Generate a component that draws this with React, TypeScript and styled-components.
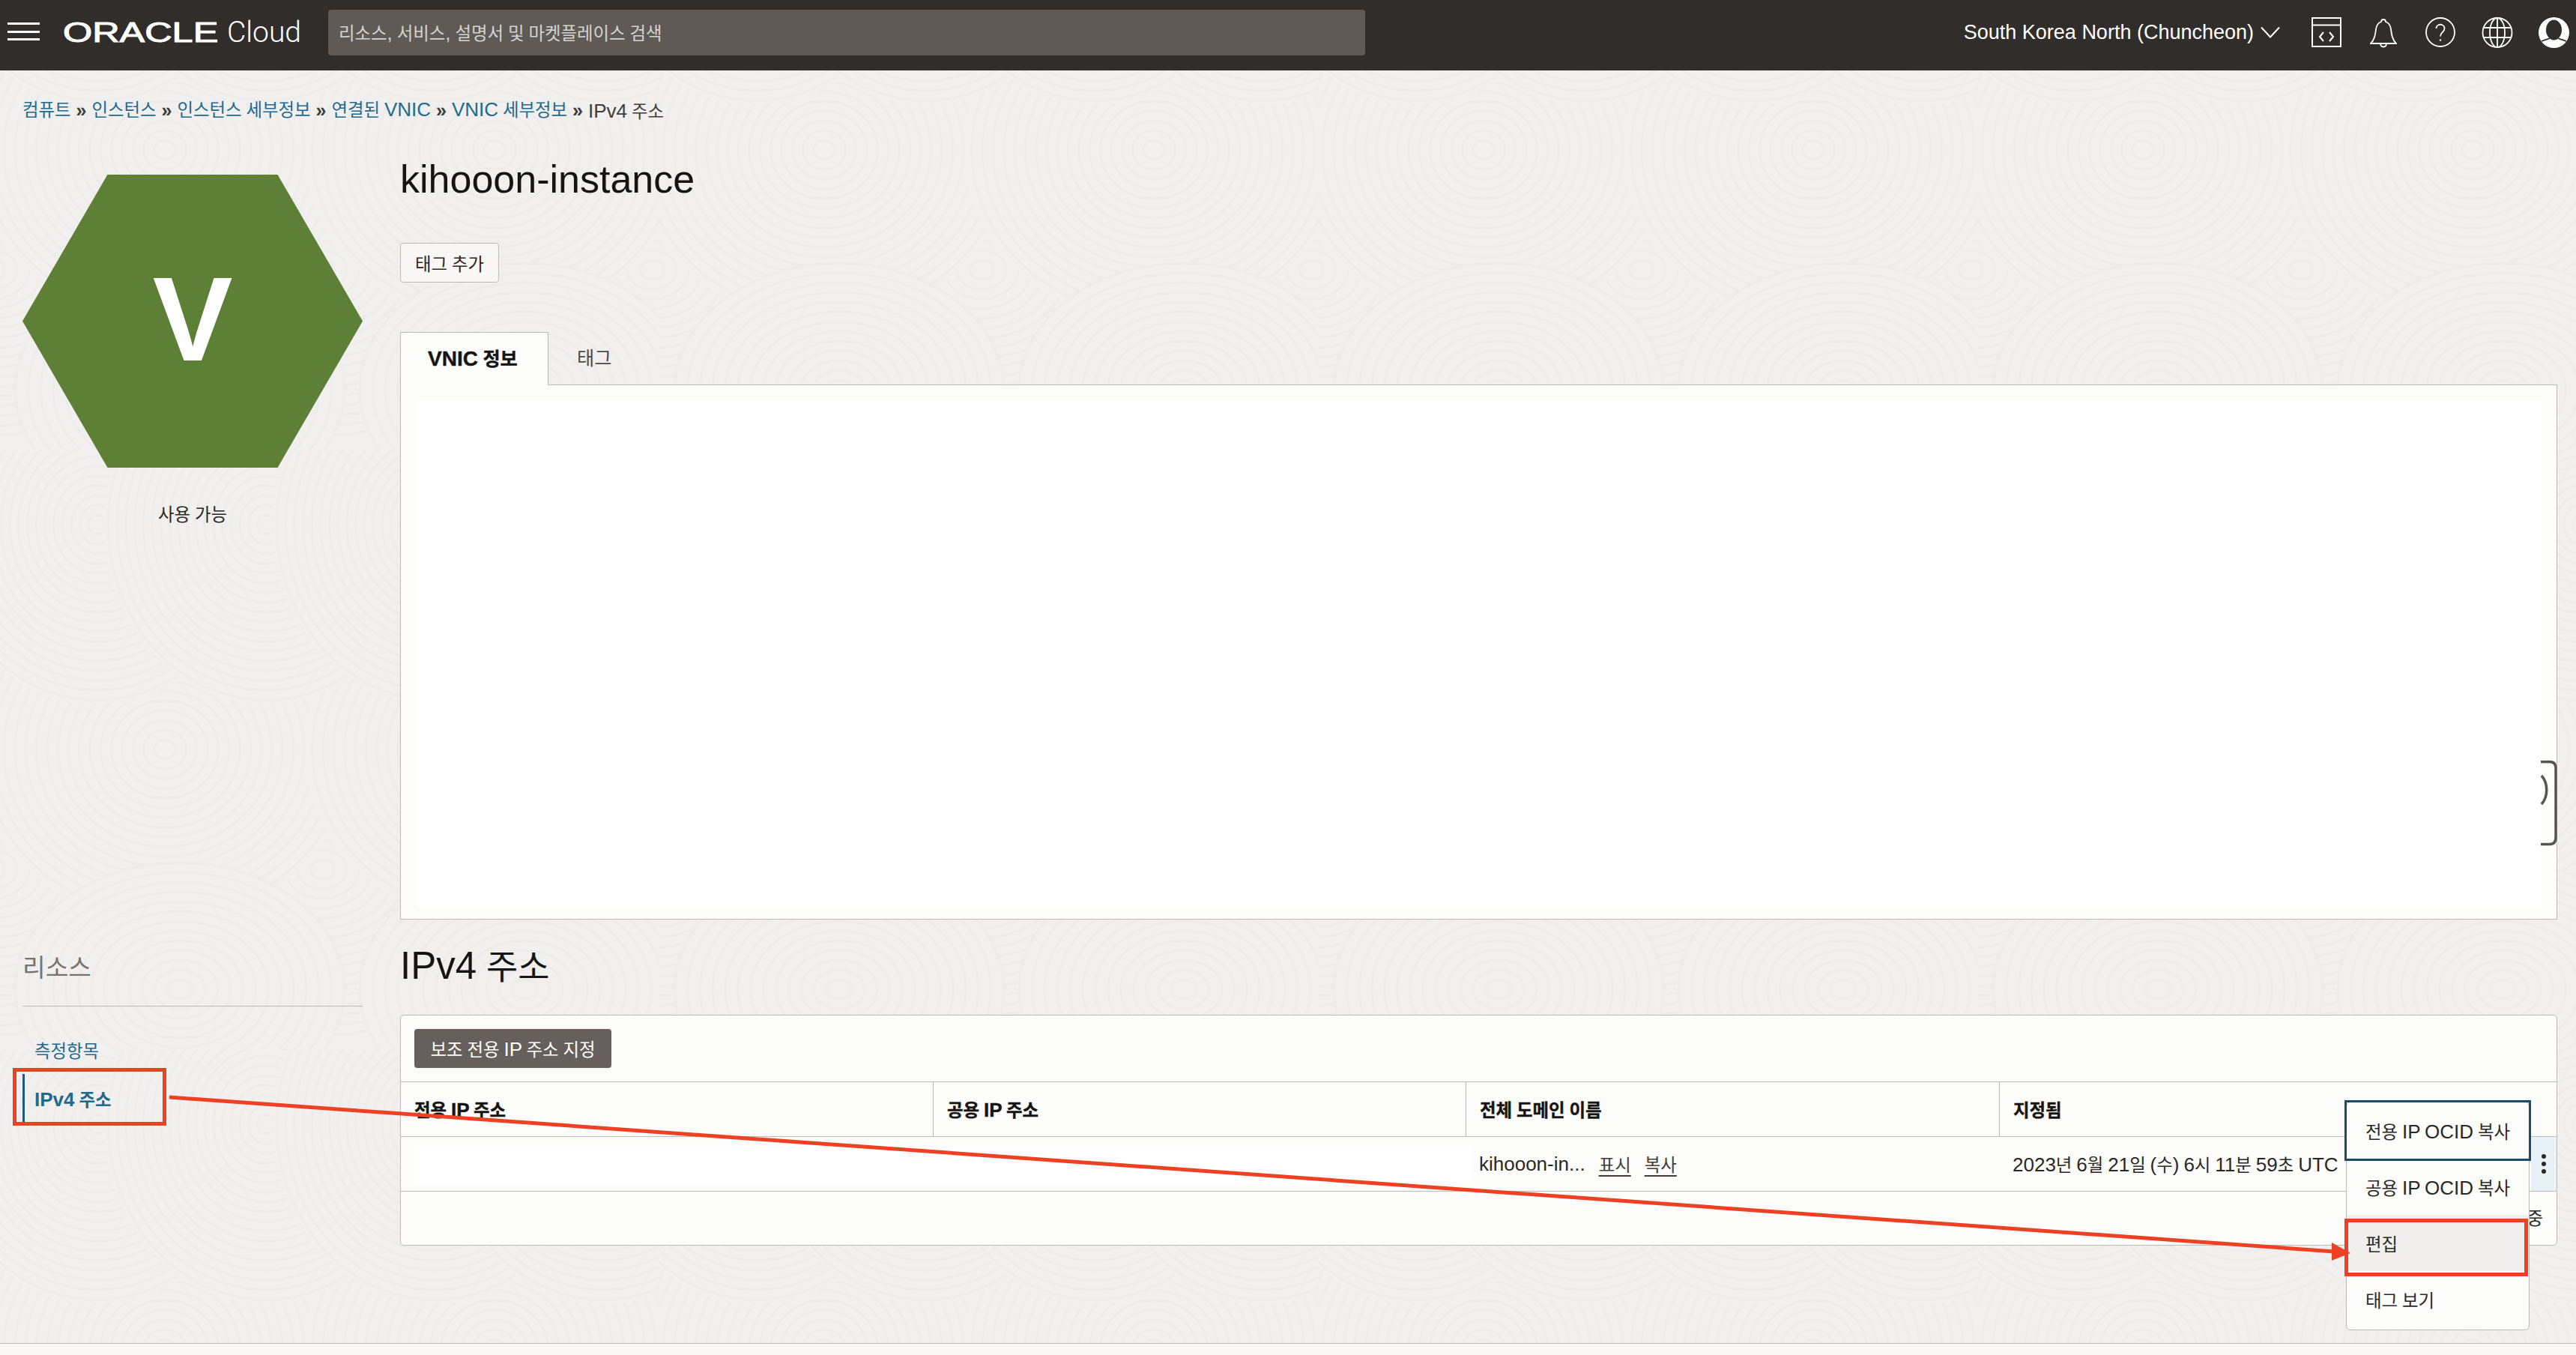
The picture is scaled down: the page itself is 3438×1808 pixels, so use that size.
import React from 'react';
import styled, { createGlobalStyle } from 'styled-components';

const SANS = `"Liberation Sans", "Noto Sans CJK KR", sans-serif`;

const Global = createGlobalStyle`
  html, body { margin: 0; padding: 0; background: #f1f0ee; }
  body { font-family: ${SANS}; color: #2a2826; }
  * { box-sizing: border-box; }
`;

const Page = styled.div`
  position: relative;
  width: 3438px;
  height: 1808px;
  overflow: hidden;
  display: flex;
  flex-direction: column;
  background: #f1f0ee;
`;

const Texture = styled.svg`
  position: absolute;
  inset: 0;
  pointer-events: none;
`;

const Hangul = styled.span`
  font-size: 0.9em;
`;

const Run = styled.span`
  white-space: pre;
  word-spacing: -1.3px;
`;

/* Hangul in the reference is set narrower than the Latin beside it */
const T = ({ children }: { children: string }) => (
  <Run>
    {children.split(/([가-힣]+)/).map((run, i) =>
      /[가-힣]/.test(run) ? <Hangul key={i}>{run}</Hangul> : <React.Fragment key={i}>{run}</React.Fragment>
    )}
  </Run>
);

const Header = styled.header`
  position: relative;
  height: 94px;
  flex: none;
  background: #312d2a;
  display: flex;
  align-items: center;
  padding: 0 9px 0 10px;
  color: #fff;
`;

const Burger = styled.div`
  width: 43px;
  height: 24px;
  display: flex;
  flex-direction: column;
  justify-content: space-between;
  margin-bottom: 10px;
  span { display: block; height: 3px; background: #fff; }
`;

const Logo = styled.div`
  width: 354px;
  margin-left: 31px;
  display: flex;
  align-items: center;
  height: 60px;
  margin-bottom: 6px;
`;

const Oracle = styled.span`
  display: inline-block;
  width: 219px;
  font-size: 36px;
  font-weight: 400;
  -webkit-text-stroke: 1px #fff;
  transform: scaleX(1.4);
  transform-origin: left center;
  white-space: nowrap;
`;

const Cloud = styled.span`
  font-family: Roboto, sans-serif;
  font-weight: 300;
  font-size: 39px;
  white-space: nowrap;
  margin-bottom: 2px;
`;

const Search = styled.div`
  width: 1384px;
  height: 61px;
  margin-bottom: 8px;
  background: #5f5a56;
  border-radius: 4px;
  padding-left: 14px;
  display: flex;
  align-items: center;
  font-size: 26px;
  color: #d6d3d0;
`;

const HeaderRight = styled.div`
  margin-left: auto;
  display: flex;
  align-items: center;
  margin-bottom: 8px;
`;

const Region = styled.div`
  font-size: 27px;
  white-space: nowrap;
  margin-right: 9px;
`;

const IconSlot = styled.svg<{ $gap?: number }>`
  display: block;
  flex: none;
  margin-left: ${p => p.$gap ?? 0}px;
`;

const Crumbs = styled.nav`
  position: relative;
  height: 106px;
  flex: none;
  padding: 0 0 0 30px;
  display: flex;
  align-items: center;
  font-size: 26px;
  color: #3f3c39;
`;

const CrumbLink = styled.span`
  color: #1f6a8f;
  line-height: 27px;
`;

const CrumbSep = styled.span`
  margin: 0 7px;
  font-size: 25px;
  font-weight: 700;
`;

const Body = styled.main`
  position: relative;
  flex: 1;
  display: grid;
  grid-template-columns: 454px 1fr;
  column-gap: 50px;
  padding: 0 25px 0 30px;
`;

const Side = styled.aside`
  display: flex;
  flex-direction: column;
`;

const Hexagon = styled.div`
  margin-top: 33px;
  width: 454px;
  height: 391px;
  background: #5d7f36;
  clip-path: polygon(25% 0, 75% 0, 100% 50%, 75% 100%, 25% 100%, 0 50%);
  display: flex;
  align-items: center;
  justify-content: center;
  color: #fff;
  font-size: 160px;
  font-weight: 700;
  padding-bottom: 6px;
`;

const State = styled.div`
  margin-top: 46px;
  text-align: center;
  font-size: 26px;
  line-height: 32px;
`;

const ResHeading = styled.div`
  margin-top: 568px;
  height: 71px;
  font-size: 37px;
  font-weight: 400;
  color: #77736f;
  line-height: 40px;
`;

const Rule = styled.div`
  height: 1px;
  background: #b9b7b4;
`;

const ResList = styled.div`
  margin-top: 25px;
  display: flex;
  flex-direction: column;
`;

const ResItem = styled.div<{ $on?: boolean }>`
  height: 65px;
  display: flex;
  align-items: center;
  padding-left: ${p => (p.$on ? 13 : 16)}px;
  font-size: 26px;
  color: #1f6a8f;
  font-weight: ${p => (p.$on ? 700 : 400)};
  border-left: ${p => (p.$on ? '3px solid #1f5a7a' : '0')};
`;

const Content = styled.section`
  display: flex;
  flex-direction: column;
  min-width: 0;
`;

const Title = styled.h1`
  margin: 10px 0 0;
  font-size: 52px;
  line-height: 58px;
  font-weight: 400;
  color: #161513;
`;

const TagBtn = styled.div`
  margin-top: 56px;
  width: 132px;
  height: 53px;
  display: flex;
  align-items: center;
  justify-content: center;
  border: 1px solid #bcbab7;
  border-radius: 4px;
  background: #f8f7f6;
  font-size: 26px;
`;

const Tabs = styled.div`
  margin-top: 66px;
  height: 71px;
  display: flex;
  border-bottom: 1px solid #bcbab7;
  flex: none;
`;

const Tab = styled.div<{ $on?: boolean }>`
  width: ${p => (p.$on ? '198px' : 'auto')};
  height: ${p => (p.$on ? 71 : 70)}px;
  padding: 0 ${p => (p.$on ? 36 : 38)}px 4px;
  display: flex;
  align-items: center;
  font-size: 28px;
  font-weight: ${p => (p.$on ? 600 : 400)};
  -webkit-text-stroke: ${p => (p.$on ? '0.4px' : '0')};
  background: ${p => (p.$on ? '#fcfcfb' : 'transparent')};
  border: ${p => (p.$on ? '1px solid #bcbab7' : '0')};
  border-bottom: 0;
  color: ${p => (p.$on ? '#161513' : '#4d4a47')};
  position: relative;
  margin-bottom: -1px;
`;

const Panel = styled.div`
  height: 713px;
  flex: none;
  background: #fcfcfb;
  border: 1px solid #bcbab7;
  border-top: 0;
  padding: 21px 20px 16px 21px;
  position: relative;
`;

const Blank = styled.div`
  height: 100%;
  background: #fff;
`;

const Feedback = styled.svg`
  position: absolute;
  right: -1px;
  top: 501px;
  overflow: visible;
`;

const H2 = styled.h2`
  margin: 33px 0 0;
  height: 60px;
  line-height: 58px;
  font-size: 51px;
  font-weight: 400;
  color: #161513;
`;

const Card = styled.div`
  position: relative;
  margin-top: 34px;
  height: 308px;
  background: #fcfcfb;
  border: 1px solid #bcbab7;
  border-radius: 5px;
`;

const Toolbar = styled.div`
  height: 89px;
  padding: 18px 0 0 18px;
  border-bottom: 1px solid #bcbab7;
`;

const Primary = styled.div`
  width: 263px;
  height: 52px;
  background: #665f5b;
  color: #fff;
  border-radius: 4px;
  display: flex;
  align-items: center;
  justify-content: center;
  font-size: 26px;
`;

const Row = styled.div<{ $head?: boolean }>`
  height: 73px;
  display: grid;
  grid-template-columns: 710px 711px 712px 1fr 34px;
  border-bottom: 1px solid #bcbab7;
  font-weight: ${p => (p.$head ? 600 : 400)};
  -webkit-text-stroke: ${p => (p.$head ? '0.4px' : '0')};
  color: ${p => (p.$head ? '#161513' : '#2a2826')};
`;

const Cell = styled.div<{ $line?: boolean; $span?: number }>`
  display: flex;
  align-items: center;
  padding-left: 18px;
  font-size: 26px;
  white-space: pre;
  border-left: ${p => (p.$line ? '1px solid #bcbab7' : '0')};
  position: relative;
  grid-column: span ${p => p.$span ?? 1};
`;

const Smudge = styled.div`
  position: absolute;
  left: 18px;
  right: -7px;
  top: 12px;
  bottom: 8px;
  background: #fff;
`;

const Act = styled.span`
  text-decoration: underline;
  text-underline-offset: 5px;
  color: #3f3c39;
  margin-left: 18px;
`;

const KebabCell = styled.div`
  height: 100%;
  background: #e8f1f5;
  display: flex;
  flex-direction: column;
  align-items: center;
  justify-content: center;
  gap: 4px;
  i { display: block; width: 6px; height: 6px; border-radius: 50%; background: #2a2826; }
`;

const Pager = styled.div`
  position: absolute;
  right: 18px;
  bottom: 20px;
  font-size: 26px;
  line-height: 30px;
`;

const Menu = styled.div`
  position: absolute;
  left: 2596px;
  top: 115px;
  width: 245px;
  height: 305px;
  background: #fcfcfb;
  border: 1px solid #bcbab7;
  border-radius: 6px;
  display: flex;
  flex-direction: column;
`;

const MenuItem = styled.div<{ $focus?: boolean; $hover?: boolean }>`
  height: 75px;
  flex: none;
  display: flex;
  align-items: center;
  padding-left: 25px;
  font-size: 26px;
  color: #2a2826;
  background: ${p => (p.$hover ? '#f0efed' : 'transparent')};
  outline: ${p => (p.$focus ? '3px solid #1f4a66' : '0')};
  outline-offset: 0;
  position: relative;
`;

const Footer = styled.footer`
  height: 16px;
  flex: none;
  background: #f9f8f7;
  border-top: 1px solid #bcbab7;
  position: relative;
`;

const RedBox = styled.div<{ $x: number; $y: number; $w: number; $h: number }>`
  position: absolute;
  left: ${p => p.$x}px;
  top: ${p => p.$y}px;
  width: ${p => p.$w}px;
  height: ${p => p.$h}px;
  border: 5px solid #ee4023;
`;

const Overlay = styled.svg`
  position: absolute;
  left: 0;
  top: 0;
  pointer-events: none;
`;

/* fingerprint-like wallpaper: overlapping sets of concentric rings */
const SWIRLS: [number, number, number, number][] = [
  [-10, 560, 230, 1.25], [430, 560, 230, 1.25], [870, 560, 230, 1.25],
  [220, 400, 230, 1.1], [660, 400, 230, 1.1],
  [130, 100, 240, 0.9], [355, 100, 240, 0.9], [580, 100, 240, 0.9], [805, 100, 240, 0.9],
  [240, 720, 170, 1.3], [700, 720, 170, 1.3],
];

const Swirl = ({ cx, cy, r, k }: { cx: number; cy: number; r: number; k: number }) => (
  <g>
    <ellipse cx={cx} cy={cy} rx={r * k} ry={r} fill="#f1f0ee" stroke="none" />
    {Array.from({ length: Math.floor(r / 13) }, (_, i) => (
      <ellipse key={i} cx={cx} cy={cy} rx={(i + 1) * 13 * k} ry={(i + 1) * 13} fill="none" stroke="#edecea" strokeWidth={3} />
    ))}
  </g>
);

export default function App() {
  return (
    <Page>
      <Global />
      <Texture width={3438} height={1808}>
        <defs>
          <pattern id="swirls" x={0} y={600} width={880} height={800} patternUnits="userSpaceOnUse">
            <rect width={880} height={800} fill="#f1f0ee" />
            {SWIRLS.map(([cx, cy, r, k]) => <Swirl key={`${cx}-${cy}`} cx={cx} cy={cy} r={r} k={k} />)}
          </pattern>
        </defs>
        <rect width={3438} height={1808} fill="url(#swirls)" />
      </Texture>

      <Header>
        <Burger><span /><span /><span /></Burger>
        <Logo>
          <Oracle>ORACLE</Oracle>
          <Cloud>Cloud</Cloud>
        </Logo>
        <Search><T>리소스, 서비스, 설명서 및 마켓플레이스 검색</T></Search>
        <HeaderRight>
          <Region>South Korea North (Chuncheon)</Region>
          <IconSlot width={26} height={16} viewBox="0 0 26 16" fill="none" stroke="#fff" strokeWidth={2}>
            <path d="M1 1.5 L13 14.5 L25 1.5" />
          </IconSlot>
          <IconSlot $gap={42} width={40} height={40} viewBox="0 0 40 40" fill="none" stroke="#fff" strokeWidth={2}>
            <rect x="1" y="1" width="38" height="38" />
            <path d="M1 10.5 H39" />
            <path d="M16 20 L11 26 L16 32 M24 20 L29 26 L24 32" />
          </IconSlot>
          <IconSlot $gap={38} width={36} height={41} viewBox="0 0 36 41" fill="none" stroke="#fff" strokeWidth={1.8}>
            <path d="M1 35 C6 30 7 24 8 16 C9 9 12 7 15 6 C15 2 21 2 21 6 C24 7 27 9 28 16 C29 24 30 30 35 35 Z" />
            <path d="M14 35 C14 41 22 41 22 35" />
          </IconSlot>
          <IconSlot $gap={38} width={40} height={40} viewBox="0 0 40 40" fill="none" stroke="#fff" strokeWidth={1.8}>
            <circle cx="20" cy="20" r="19" />
            <path d="M14.5 15 C14.5 8 25.5 8 25.5 15 C25.5 20 20 20 20 25.5" />
            <circle cx="20" cy="30.5" r="1.2" fill="#fff" stroke="none" />
          </IconSlot>
          <IconSlot $gap={35} width={42} height={41} viewBox="0 0 42 41" fill="none" stroke="#fff" strokeWidth={1.8}>
            <circle cx="21" cy="20.5" r="19.5" />
            <ellipse cx="21" cy="20.5" rx="10" ry="19.5" />
            <path d="M21 1 V40 M2 14 H40 M2 27 H40" />
          </IconSlot>
          <IconSlot $gap={34} width={41} height={41} viewBox="0 0 41 41">
            <circle cx="20.5" cy="20.5" r="20.5" fill="#fff" />
            <ellipse cx="20.5" cy="17" rx="10.5" ry="13.5" fill="#312d2a" />
            <path d="M4 32 C9 30 13 29 15 28 M37 32 C32 30 28 29 26 28" stroke="#312d2a" strokeWidth={1.6} fill="none" />
          </IconSlot>
        </HeaderRight>
      </Header>

      <Crumbs>
        <CrumbLink><T>컴퓨트</T></CrumbLink><CrumbSep>»</CrumbSep>
        <CrumbLink><T>인스턴스</T></CrumbLink><CrumbSep>»</CrumbSep>
        <CrumbLink><T>인스턴스 세부정보</T></CrumbLink><CrumbSep>»</CrumbSep>
        <CrumbLink><T>연결된 VNIC</T></CrumbLink><CrumbSep>»</CrumbSep>
        <CrumbLink><T>VNIC 세부정보</T></CrumbLink><CrumbSep>»</CrumbSep>
        <span><T>IPv4 주소</T></span>
      </Crumbs>

      <Body>
        <Side>
          <Hexagon>V</Hexagon>
          <State><T>사용 가능</T></State>
          <ResHeading><T>리소스</T></ResHeading>
          <Rule />
          <ResList>
            <ResItem><T>측정항목</T></ResItem>
            <ResItem $on><T>IPv4 주소</T></ResItem>
          </ResList>
        </Side>
        <Content>
          <Title>kihooon-instance</Title>
          <TagBtn><T>태그 추가</T></TagBtn>
          <Tabs>
            <Tab $on><T>VNIC 정보</T></Tab>
            <Tab><T>태그</T></Tab>
          </Tabs>
          <Panel>
            <Blank />
            <Feedback width={22} height={113} viewBox="0 0 22 113" fill="none" stroke="#555" strokeWidth={3.5}>
              <path d="M0 1.5 H12 Q20 1.5 20 10 V102 Q20 111.5 12 111.5 H0" />
              <path d="M1 20 C10 30 10 48 1 58" />
            </Feedback>
          </Panel>
          <H2><T>IPv4 주소</T></H2>
          <Card>
            <Toolbar><Primary><T>보조 전용 IP 주소 지정</T></Primary></Toolbar>
            <Row $head>
              <Cell><T>전용 IP 주소</T></Cell>
              <Cell $line><T>공용 IP 주소</T></Cell>
              <Cell $line><T>전체 도메인 이름</T></Cell>
              <Cell $line><T>지정됨</T></Cell>
            </Row>
            <Row>
              <Cell $span={2}><Smudge /></Cell>
              <Cell>kihooon-in...<Act><T>표시</T></Act><Act><T>복사</T></Act></Cell>
              <Cell><T>2023년 6월 21일 (수) 6시 11분 59초 UTC</T></Cell>
              <KebabCell><i /><i /><i /></KebabCell>
            </Row>
            <Pager><T>중</T></Pager>
            <Menu>
              <MenuItem $focus><T>전용 IP OCID 복사</T></MenuItem>
              <MenuItem><T>공용 IP OCID 복사</T></MenuItem>
              <MenuItem $hover><T>편집</T></MenuItem>
              <MenuItem><T>태그 보기</T></MenuItem>
            </Menu>
          </Card>
        </Content>
      </Body>

      <Footer />

      <RedBox $x={17} $y={1425} $w={205} $h={77} />
      <RedBox $x={3129} $y={1626} $w={245} $h={77} />
      <Overlay width={3438} height={1808}>
        <line x1={226} y1={1464} x2={3115} y2={1670} stroke="#ee4023" strokeWidth={5} />
        <polygon points="3112,1658 3137,1672 3112,1682" fill="#ee4023" />
      </Overlay>
    </Page>
  );
}
